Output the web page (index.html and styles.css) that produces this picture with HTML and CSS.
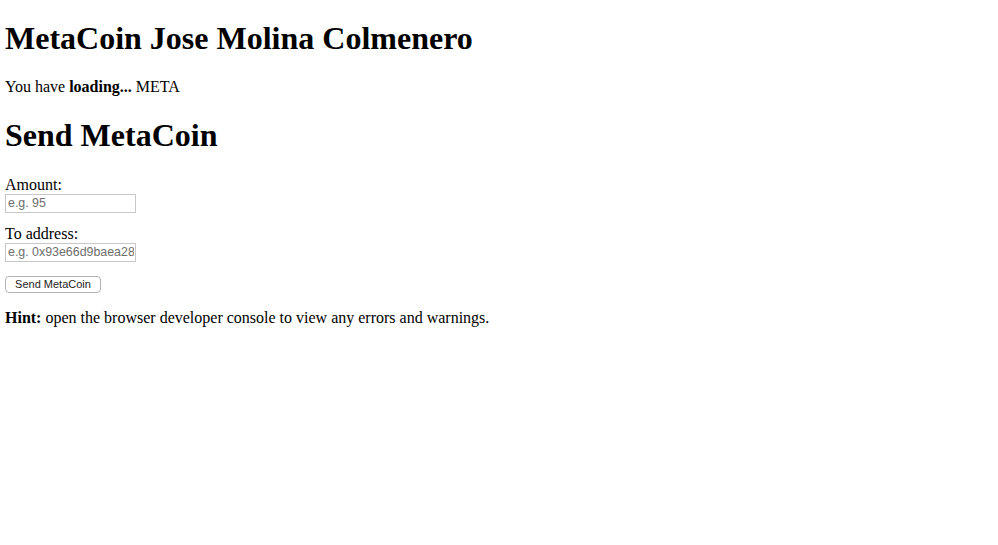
FILE: index.html
```html
<!DOCTYPE html>
<html>
<head>
<meta charset="utf-8">
<title>MetaCoin</title>
<link rel="stylesheet" href="styles.css">
</head>
<body>
<h1 class="title">MetaCoin Jose Molina Colmenero</h1>
<p class="balance">You have <strong>loading...</strong> META</p>
<h2 class="subtitle">Send MetaCoin</h2>
<div class="field">
  <label class="label" for="amount">Amount:</label>
  <input class="input" type="text" id="amount" placeholder="e.g. 95">
</div>
<div class="field">
  <label class="label" for="receiver">To address:</label>
  <input class="input" type="text" id="receiver" placeholder="e.g. 0x93e66d9baea28c17d9fc393b53e3fbdd76899dae">
</div>
<div class="field">
  <button class="send">Send MetaCoin</button>
</div>
<p class="hint"><strong>Hint:</strong> open the browser developer console to view any errors and warnings.</p>
</body>
</html>
```
FILE: styles.css
```css
body {
  margin: 0 5px 8px;
  font-family: "Liberation Serif", "Times New Roman", serif;
  font-size: 16px;
  color: #000;
  background: #fff;
}
.title {
  font-size: 32px;
  margin: 19.5px 0 21.44px;
}
.balance {
  margin: 16px 0;
}
.subtitle {
  font-size: 32px;
  margin: 21.44px 0;
}
.field {
  display: flex;
  flex-direction: column;
  align-items: flex-start;
  margin-bottom: 12px;
}
.label {
  line-height: 18px;
}
.input {
  box-sizing: border-box;
  width: 131px;
  height: 19px;
  margin: 0;
  padding: 1px 1px 1px 2px;
  border: 1px solid #c8c8c8;
  font-family: "Liberation Sans", Arial, sans-serif;
  font-size: 12.4px;
}
.input::placeholder {
  color: #6e6e6e;
}
.send {
  box-sizing: border-box;
  height: 17px;
  width: 96px;
  padding: 0 6px;
  margin: 2px 0 0;
  background: #fff;
  border: 1px solid #b4b4b4;
  border-radius: 4px;
  font-family: "Liberation Sans", Arial, sans-serif;
  font-size: 11px;
  color: #222;
}
.hint {
  margin: 16px 0;
}
```
